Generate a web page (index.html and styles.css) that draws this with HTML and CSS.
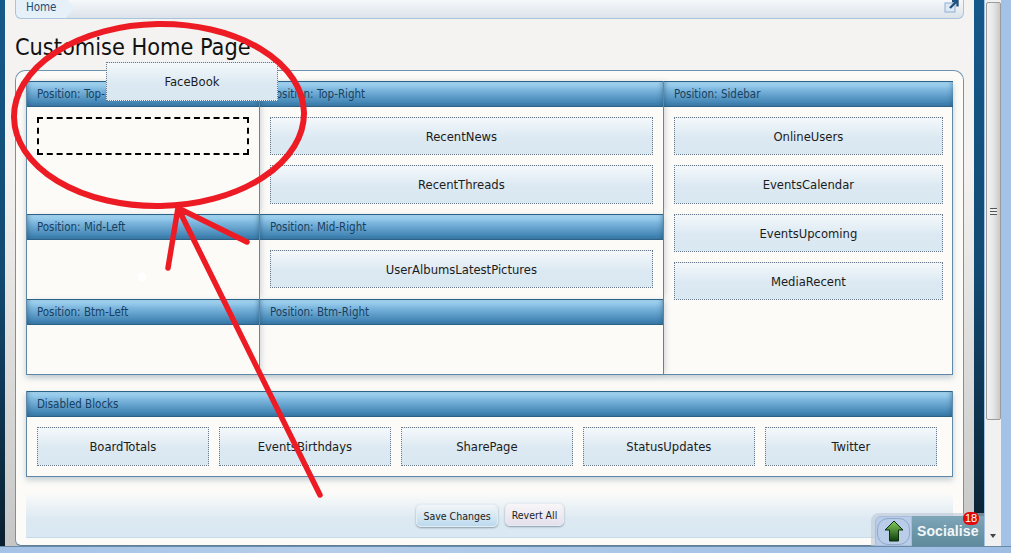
FILE: index.html
```html
<!DOCTYPE html>
<html lang="en">

<head>
    <meta charset="UTF-8">
    <title>Customise Home Page</title>
    <link rel="stylesheet" href="styles.css">
</head>

<body>

    <div class="window">
        <div class="main">
            <div class="strip strip-left"></div>

            <div class="page">
                <div class="crumbs">
                    <a class="crumb-home">Home</a>
                    <svg class="crumb-icon" width="16" height="14" viewBox="0 0 16 14">
                        <rect x="1" y="4" width="10" height="9" fill="#dce9f5" stroke="#8fb0d0"/>
                        <path d="M6 9 L12 3 M8 2 H13.5 V7.5" fill="none" stroke="#23527c" stroke-width="2.4"/>
                    </svg>
                </div>

                <h1 class="title">Customise Home Page</h1>

                <div class="panel">
                    <div class="layout">
                        <div class="pos">
                            <div class="pos-head">Position: Top-Left</div>
                            <div class="pos-body body-top">
                                <div class="drop-slot"></div>
                            </div>
                        </div>
                        <div class="pos">
                            <div class="pos-head">Position: Top-Right</div>
                            <div class="pos-body body-top">
                                <div class="block">RecentNews</div>
                                <div class="block">RecentThreads</div>
                            </div>
                        </div>
                        <div class="pos pos-side">
                            <div class="pos-head">Position: Sidebar</div>
                            <div class="pos-body">
                                <div class="block">OnlineUsers</div>
                                <div class="block">EventsCalendar</div>
                                <div class="block">EventsUpcoming</div>
                                <div class="block">MediaRecent</div>
                            </div>
                        </div>
                        <div class="pos">
                            <div class="pos-head">Position: Mid-Left</div>
                            <div class="pos-body body-mid"></div>
                        </div>
                        <div class="pos">
                            <div class="pos-head">Position: Mid-Right</div>
                            <div class="pos-body body-mid">
                                <div class="block">UserAlbumsLatestPictures</div>
                            </div>
                        </div>
                        <div class="pos">
                            <div class="pos-head">Position: Btm-Left</div>
                            <div class="pos-body body-btm"></div>
                        </div>
                        <div class="pos">
                            <div class="pos-head">Position: Btm-Right</div>
                            <div class="pos-body body-btm"></div>
                        </div>
                    </div>

                    <div class="disabled">
                        <div class="pos-head">Disabled Blocks</div>
                        <div class="disabled-row">
                            <div class="block">BoardTotals</div>
                            <div class="block">EventsBirthdays</div>
                            <div class="block">SharePage</div>
                            <div class="block">StatusUpdates</div>
                            <div class="block">Twitter</div>
                        </div>
                    </div>

                    <div class="actions">
                        <button class="btn btn-save">Save Changes</button>
                        <button class="btn btn-revert">Revert All</button>
                    </div>
                </div>
            </div>

            <div class="strip strip-right"></div>

            <div class="scrollbar">
                <div class="thumb"><span class="grip"></span></div>
                <div class="arrow-down"></div>
            </div>

            <div class="frame-right"></div>
        </div>
        <div class="frame-bottom"></div>

        <!-- block being dragged -->
        <div class="block block-drag">FaceBook</div>

        <!-- red marker scribbled on top -->
        <svg class="scribble" width="1011" height="553" viewBox="0 0 1011 553">
            <ellipse cx="159" cy="115" rx="145" ry="91" transform="rotate(-1 159 115)" fill="none" stroke="#ed1c24" stroke-width="6"/>
            <path d="M320 495 L178 208 L168 268 M178 208 L247 242" fill="none" stroke="#ed1c24" stroke-width="5.5" stroke-linecap="round" stroke-linejoin="round"/>
            <circle cx="142" cy="277" r="4" fill="#ffffff"/>
        </svg>

        <div class="social">
            <span class="social-up">
                <span class="social-ring">
                    <svg width="20" height="22" viewBox="0 0 20 22">
                        <defs>
                            <linearGradient id="upgreen" x1="0" y1="0" x2="0" y2="1">
                                <stop offset="0" stop-color="#86cf5e"/>
                                <stop offset="1" stop-color="#0d3d0d"/>
                            </linearGradient>
                        </defs>
                        <path d="M10 1 L19 10 H14.5 V21 H5.5 V10 H1 Z" fill="url(#upgreen)" stroke="#0b2e0b"/>
                    </svg>
                </span>
            </span>
            <span class="social-label">Socialise</span>
            <span class="social-count">18</span>
        </div>
    </div>

</body>

</html>
```

FILE: styles.css
```css
* {
    box-sizing: border-box;
}

body {
    margin: 0;
    font-family: "DejaVu Sans Condensed", "DejaVu Sans", sans-serif;
    color: #1c1c1c;
}

.window {
    position: relative;
    width: 1011px;
    height: 553px;
    overflow: hidden;
    background-color: #a4c2e6;
}

.main {
    display: flex;
    height: 546px;
}

.strip {
    background: linear-gradient(#15598a, #124a72 50%, #0a1f2e);
}

.strip-left {
    width: 5px;
}

.strip-right {
    width: 10px;
}

.page {
    width: 969px;
    padding: 0 10px;
    background: linear-gradient(#f4f3f1 30%, #c6c6c6);
}

.crumbs {
    display: flex;
    justify-content: space-between;
    height: 19px;
    padding-right: 3px;
    background: linear-gradient(#f6f8fa, #dbe3ea);
    border: 1px solid #a9c4dc;
    border-top: 0;
    border-radius: 0 0 6px 6px;
}

.crumb-home {
    position: relative;
    width: 49px;
    padding: 0 0 0 10px;
    font-size: 11.5px;
    line-height: 15px;
    color: #1d4d73;
    background-color: #e6f0f9;
    border-radius: 0 0 0 6px;
}

.crumb-home::after {
    content: "";
    position: absolute;
    left: 49px;
    top: -3px;
    border-left: 9px solid #e6f0f9;
    border-top: 11px solid transparent;
    border-bottom: 11px solid transparent;
}

.crumb-icon {
    margin-top: -1px;
}

.title {
    height: 51px;
    margin: 0;
    padding-top: 13px;
    font-size: 23.3px;
    font-weight: normal;
    line-height: 29px;
    color: #111;
}

.panel {
    height: 476px;
    padding: 10px 10px 0 10px;
    background-color: #fcfbf8;
    border: 1px solid #6f94b2;
    border-bottom-color: #5f7f99;
    border-radius: 10px 10px 0 6px;
}

.layout {
    display: grid;
    grid-template-columns: 233px 404px 290px;
    height: 294px;
    margin-bottom: 16px;
    border-bottom: 1px solid #5f88a8;
    border-right: 1px solid #5f88a8;
    box-shadow: 0 3px 6px rgba(90, 120, 140, 0.35);
}

.pos {
    display: flex;
    flex-direction: column;
    border-left: 1px solid #5f88a8;
    box-shadow: 4px 0 6px -2px rgba(90, 110, 125, 0.3);
}

.pos-side {
    grid-column: 3;
    grid-row: 1 / 4;
    box-shadow: none;
}

.pos-head {
    height: 26px;
    padding-left: 10px;
    font-size: 11.5px;
    line-height: 24px;
    color: #17405f;
    background: linear-gradient(#a9daf5, #7ab4dc 35%, #3f82b2 90%, #3f7ca8);
    border-top: 1px solid #2c6288;
    border-bottom: 1px solid #2c6288;
    box-shadow: inset 4px 0 5px -3px rgba(30, 70, 100, 0.45), inset -4px 0 5px -3px rgba(30, 70, 100, 0.45);
}

.pos-body {
    display: flex;
    flex-direction: column;
    gap: 10px;
    flex: 1;
    padding: 10px;
}

.body-top {
    height: 107px;
    flex: none;
}

.body-mid {
    height: 59px;
    flex: none;
}

.body-btm {
    height: 50px;
    flex: none;
}

.block {
    height: 38.33px;
    flex: none;
    font-size: 12.9px;
    line-height: 38px;
    text-align: center;
    color: #1c1c1c;
    background: linear-gradient(#f4f8fb, #dce9f2 55%, #d9e8f1);
    border: 1px dotted #66788a;
}

.drop-slot {
    height: 38.33px;
    flex: none;
    border: 2px dashed #000;
}

.disabled {
    border: 1px solid #5f88a8;
    border-top: 0;
    height: 86px;
    box-shadow: 0 3px 6px rgba(90, 120, 140, 0.35);
}

.disabled-row {
    display: grid;
    grid-template-columns: repeat(5, 172px);
    gap: 10px;
    padding: 10px;
}

.disabled-row .block {
    height: 39px;
}

.actions {
    display: flex;
    justify-content: center;
    gap: 7px;
    height: 45px;
    margin-top: 16px;
    padding: 11px 0 0 2px;
    background: linear-gradient(#fbfbf9, #dce9f2 60%, #d9e8f2);
    border-bottom: 1px solid #c5dbe8;
}

.btn {
    height: 23px;
    padding: 0 6px;
    font-family: inherit;
    font-size: 10.5px;
    color: #1c1c1c;
    border: 1px solid #e4edf3;
    border-radius: 5px;
    box-shadow: 0 1px 2px rgba(70, 90, 110, 0.55);
}

.btn-save {
    background: linear-gradient(#f2f6f9, #bcdaee);
}

.btn-revert {
    margin-top: -1px;
    background: linear-gradient(#f8f6f8, #e5e0ec);
}

.scrollbar {
    position: relative;
    width: 17px;
    margin-left: 1px;
    background-color: #f1f1f1;
}

.thumb {
    display: flex;
    align-items: center;
    justify-content: center;
    width: 15px;
    height: 418px;
    margin: 2px 0 0 1px;
    background: linear-gradient(90deg, #f2f2f2, #e6e6e6 50%, #c9c9c9);
    border: 1px solid #9b9b9b;
    border-radius: 2px;
}

.grip {
    width: 7px;
    height: 7px;
    background: repeating-linear-gradient(#555 0 1px, #eee 1px 3px);
}

.arrow-down {
    position: absolute;
    left: 5px;
    top: 534px;
    border-top: 4px solid #444;
    border-left: 3px solid transparent;
    border-right: 3px solid transparent;
}

.frame-right {
    width: 9px;
    margin-left: 1px;
    background-color: #a4c2e6;
}

.frame-bottom {
    height: 7px;
    background: linear-gradient(90deg, #a4c2e6, #b4cdea 30%, #9dbde3);
    border-top: 1px solid #6b8aa6;
}

.block-drag {
    position: absolute;
    left: 106px;
    top: 62px;
    width: 172px;
    height: 39px;
}

.scribble {
    position: absolute;
    left: 0;
    top: 0;
    pointer-events: none;
}

.social {
    position: absolute;
    left: 871px;
    top: 513px;
    display: flex;
    width: 113px;
    height: 33px;
    padding: 3px 0 0 4px;
    background-color: rgba(190, 200, 215, 0.6);
    border-radius: 8px 0 0 0;
}

.social-up {
    display: flex;
    align-items: center;
    justify-content: center;
    width: 37px;
    height: 30px;
    background-color: #b9cde9;
    border: 1px solid #a7bddb;
    border-radius: 6px 0 0 0;
}

.social-ring {
    display: flex;
    align-items: center;
    justify-content: center;
    width: 33px;
    height: 27px;
    border: 1px solid #8fa9cc;
    border-radius: 11px;
}

.social-label {
    flex: 1;
    padding-left: 5px;
    font-family: "Liberation Sans", Arial, sans-serif;
    font-size: 14px;
    font-weight: bold;
    line-height: 30px;
    letter-spacing: 0.1px;
    color: #f2f6f8;
    background: linear-gradient(#7ea6b8, #5d8a9c);
}

.social-count {
    position: absolute;
    right: 5px;
    top: -1px;
    width: 16px;
    height: 13px;
    font-family: "Liberation Sans", Arial, sans-serif;
    font-size: 11px;
    line-height: 13px;
    text-align: center;
    color: #fff;
    background-color: #e00b0b;
    border-radius: 6px;
}
```
